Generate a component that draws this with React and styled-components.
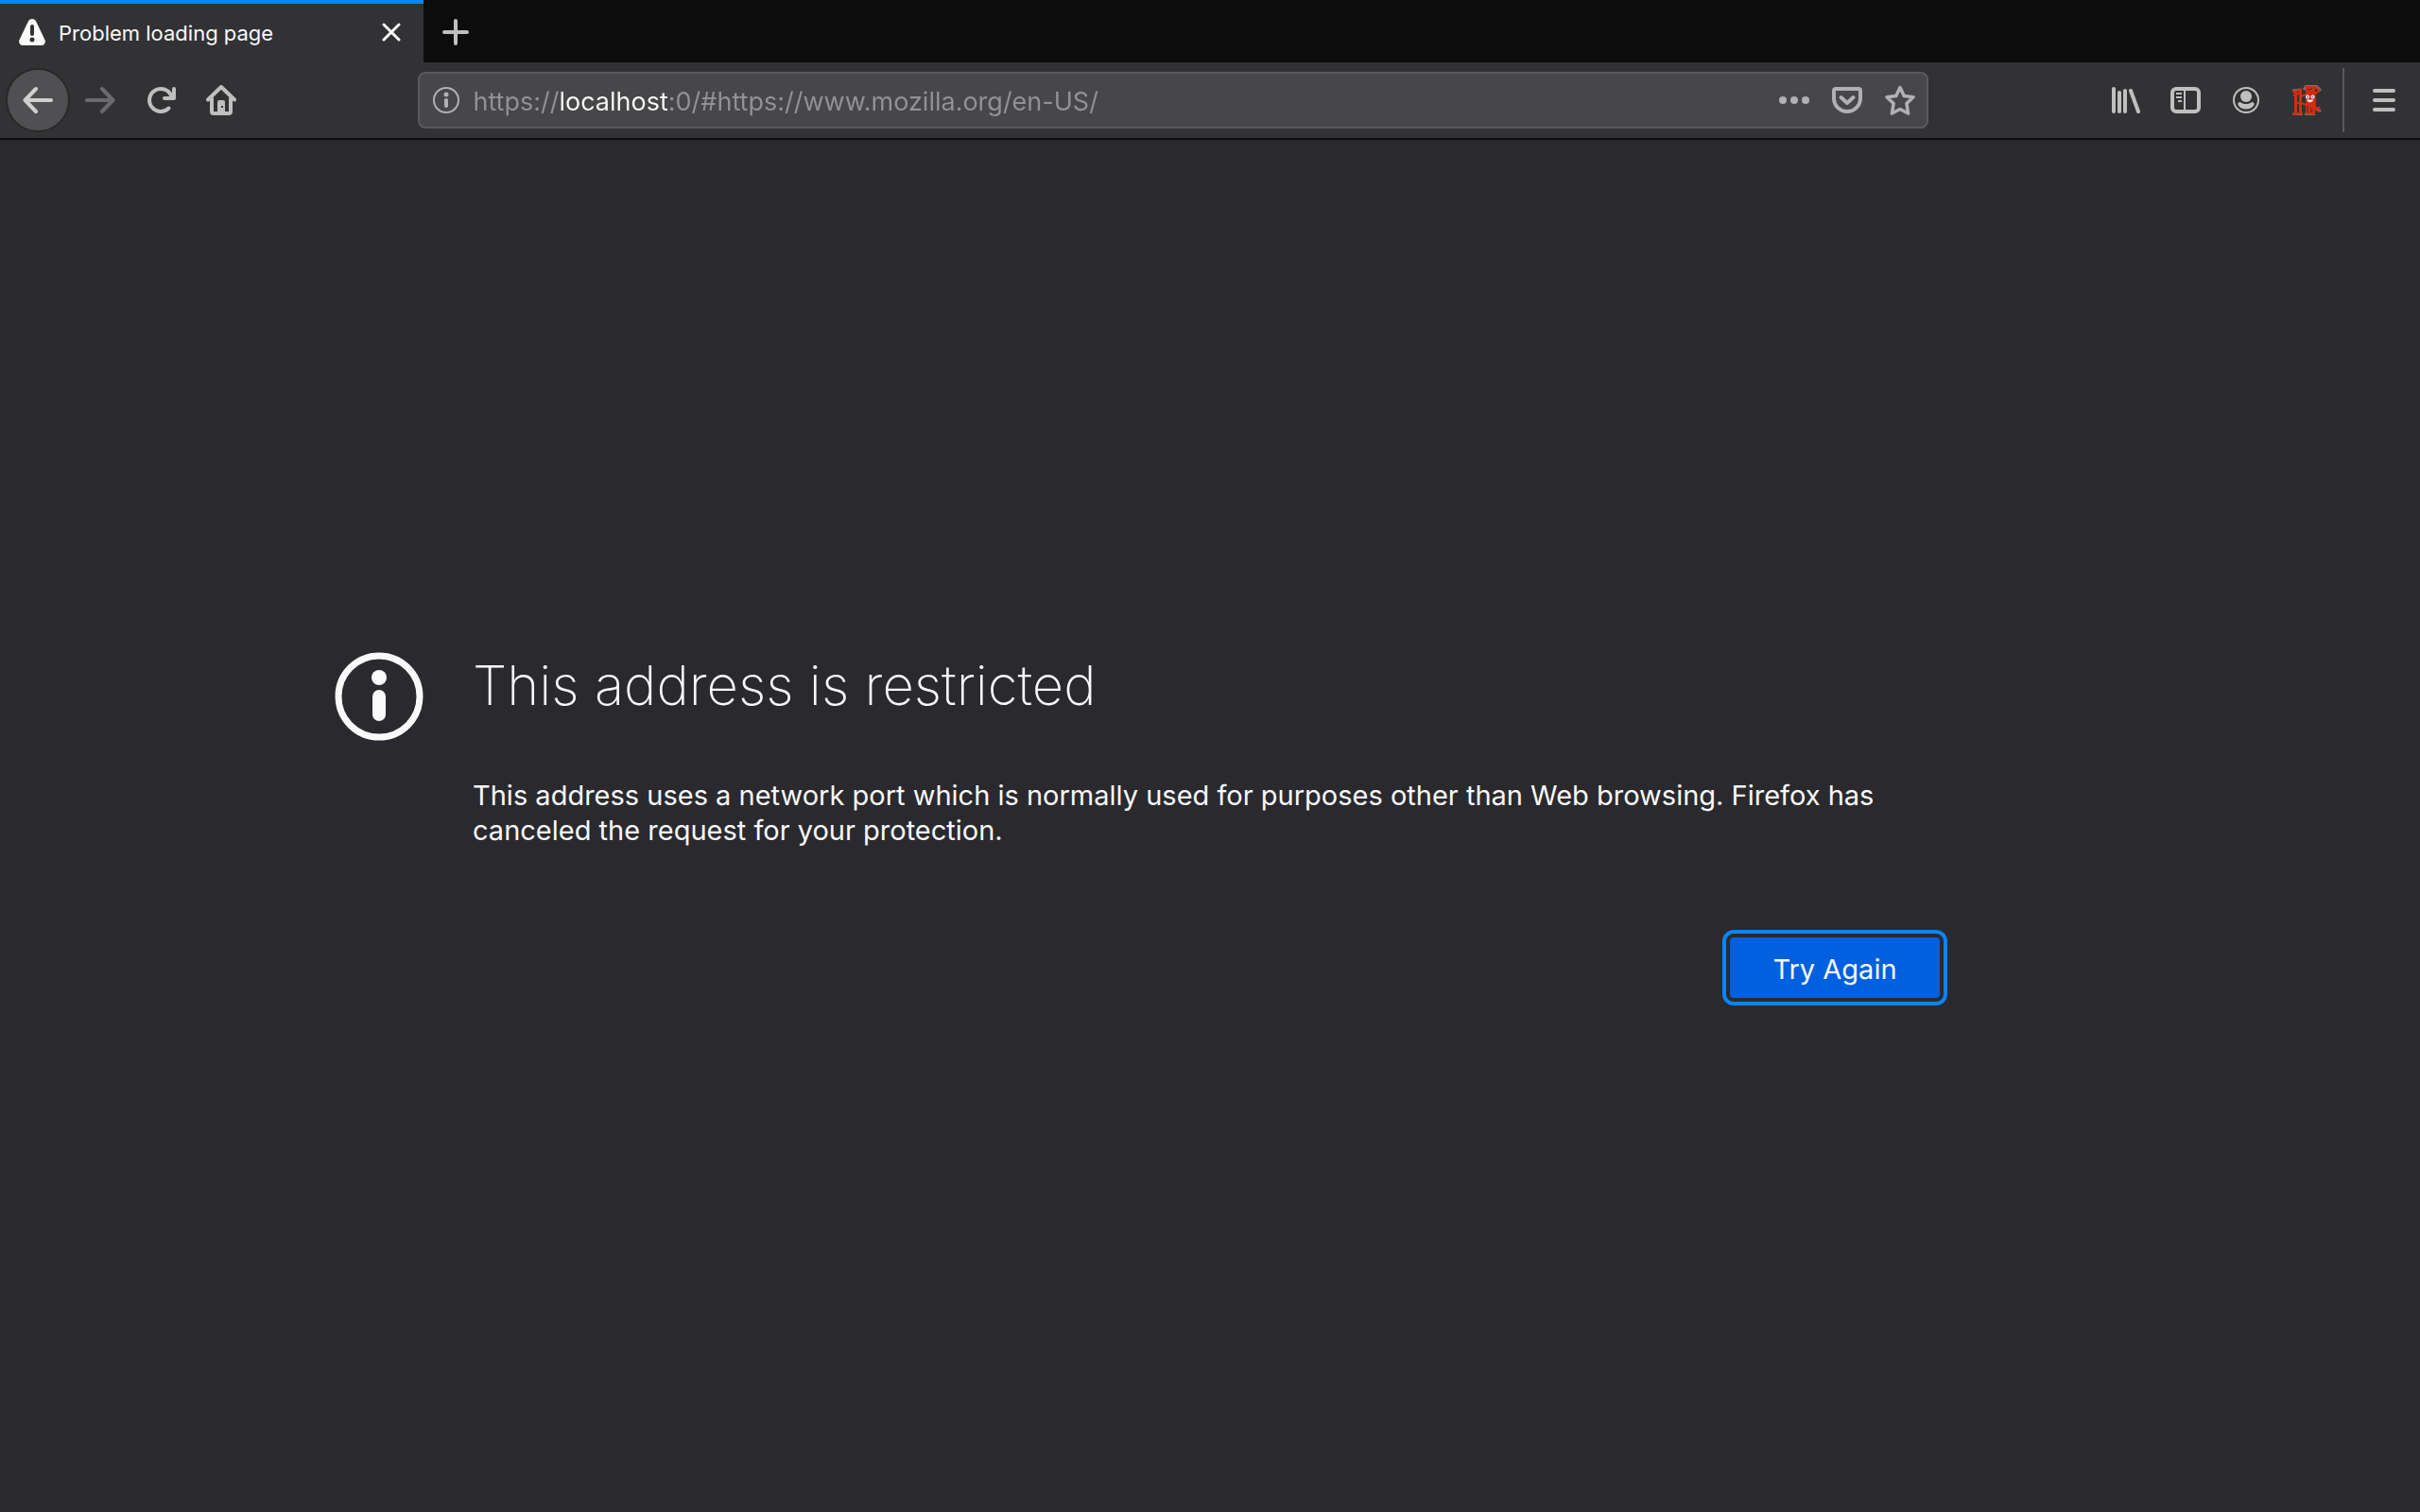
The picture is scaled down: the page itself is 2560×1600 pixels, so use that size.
import React, { useState } from "react";
import styled, { createGlobalStyle } from "styled-components";

const GlobalStyle = createGlobalStyle`
  * { box-sizing: border-box; }
  body { margin: 0; background: #2a2a2e; }
  button, input { font: inherit; }
`;

const Window = styled.div`
  display: flex;
  flex-direction: column;
  min-height: 100vh;
  background: #2a2a2e;
  color: #f9f9fa;
  font-family: Inter, "Liberation Sans", sans-serif;
`;

const TabStrip = styled.div`
  display: flex;
  height: 66px;
  background: #0c0c0d;
`;

const Tab = styled.div`
  display: flex;
  align-items: center;
  gap: 14px;
  width: 448px;
  padding: 0 14px 2px 20px;
  border-top: 4px solid #0a84ff;
  background: #323234;
`;

const TabTitle = styled.span`
  flex: 1;
  padding-top: 2px;
  font-size: 22px;
  line-height: 28px;
  white-space: nowrap;
`;

const IconButton = styled.button`
  display: flex;
  align-items: center;
  justify-content: center;
  flex: none;
  width: ${(p) => p.$size || 64}px;
  height: ${(p) => p.$size || 64}px;
  padding: 0;
  border: 0;
  background: none;
  color: ${(p) => p.$color || "#bfbfc0"};
`;

const BackButton = styled(IconButton)`
  border: 2px solid #282829;
  border-radius: 50%;
  background: #505052;
  color: #d0d0d1;
`;

const Toolbar = styled.nav`
  display: flex;
  align-items: center;
  height: 82px;
  padding: 0 6px;
  border-bottom: 2px solid #0c0c0d;
  background: #323234;
`;

const Spacer = styled.div`
  flex: 1;
`;

const UrlBar = styled.div`
  display: flex;
  align-items: center;
  flex: 9;
  height: 60px;
  margin: 0 1px;
  padding: 0 0 0 14px;
  border: 2px solid #5a5a5c;
  border-radius: 8px;
  background: #474749;
  color: #b1b1b3;
`;

const UrlInput = styled.input`
  flex: 1;
  min-width: 0;
  height: 40px;
  margin-left: 14px;
  padding: 2px 0 0;
  border: 0;
  outline: 0;
  background: linear-gradient(90deg, #929294 91px, #f9f9fa 91px 207px, #929294 207px);
  background-clip: text;
  -webkit-background-clip: text;
  color: transparent;
  font-size: 27px;
`;

const Separator = styled.div`
  width: 2px;
  height: 68px;
  margin: 0 10px 0 6px;
  background: #5a5a5c;
`;

const Page = styled.main`
  display: grid;
  flex: 1;
  grid-template-columns: 1fr minmax(0, 1560px) 1fr;
  align-content: center;
`;

const PageIcon = styled.div`
  justify-self: end;
  margin: 6px 52px 0 0;
`;

const Title = styled.h1`
  margin: 0 0 57px;
  font-size: 58px;
  font-weight: 200;
  line-height: 82px;
`;

const Message = styled.p`
  margin: 0;
  font-size: 29px;
  line-height: 37px;
`;

const Actions = styled.div`
  display: flex;
  justify-content: flex-end;
  padding: 95px 8px 8px;
`;

const PrimaryButton = styled.button`
  width: 222px;
  height: 64px;
  padding: 2px 0 0;
  border: 0;
  border-radius: 4px;
  outline: 4px solid #0a84ff;
  outline-offset: 4px;
  background: #0060df;
  color: #f9f9fa;
  font-size: 29px;
`;

const Svg = ({ size = 32, children }) => (
  <svg width={size} height={size} viewBox={`0 0 ${size} ${size}`} fill="none" aria-hidden="true">
    {children}
  </svg>
);

const line = { stroke: "currentColor", strokeWidth: 4, strokeLinecap: "round", strokeLinejoin: "round" };

const WarningIcon = () => (
  <Svg size={28}>
    <path fill="currentColor" fillRule="evenodd" d="M14 0c1.900 0 3.300 1 4.200 2.700l9.200 19.200C28.800 25 27 28 24 28H4C1 28-.8 25 .6 21.900L9.800 2.700C10.700 1 12.100 0 14 0zm0 6a2 2 0 0 0-2 2v8a2 2 0 0 0 4 0V8a2 2 0 0 0-2-2zm0 13.500a2.500 2.500 0 1 0 0 5 2.500 2.500 0 0 0 0-5z" />
  </Svg>
);
const CloseIcon = () => <Svg size={20}><path {...line} strokeWidth={3} d="M2 2l16 16M18 2L2 18" /></Svg>;
const PlusIcon = () => <Svg size={28}><path {...line} d="M14 2v24M2 14h24" /></Svg>;
const BackIcon = () => <Svg><path {...line} d="M14 4L2.500 16 14 28M3 16h27" /></Svg>;
const ForwardIcon = () => <Svg><path {...line} d="M18 4l11.500 12L18 28M29 16H2" /></Svg>;
const ReloadIcon = () => (
  <Svg>
    <path {...line} d="M24.500 24.500A12 12 0 1 1 27 11M30 4v10H20" />
    <path fill="currentColor" d="M25 8h5v6h-5z" />
  </Svg>
);
const HomeIcon = () => (
  <Svg>
    <path {...line} d="M2 15.500L16 2l14 13.500M6 14v14a2 2 0 0 0 2 2h16a2 2 0 0 0 2-2V14" />
    <path fill="currentColor" fillRule="evenodd" d="M14 16h4a2 2 0 0 1 2 2v12h-8V18a2 2 0 0 1 2-2zm2 6v2h2v-2z" />
  </Svg>
);
const InfoIcon = () => (
  <Svg size={28}>
    <circle cx="14" cy="14" r="13" stroke="currentColor" strokeWidth="2" />
    <circle cx="14" cy="8" r="2.500" fill="currentColor" />
    <path {...line} d="M14 14v6" />
  </Svg>
);
const DotsIcon = () => (
  <Svg><g fill="currentColor"><circle cx="4" cy="16" r="4" /><circle cx="16" cy="16" r="4" /><circle cx="28" cy="16" r="4" /></g></Svg>
);
const PocketIcon = () => (
  <Svg><path {...line} d="M4 4h24a2 2 0 0 1 2 2v8a14 14 0 0 1-28 0V6a2 2 0 0 1 2-2z" /><path {...line} d="M9.500 13l6.500 6 6.500-6" /></Svg>
);
const StarIcon = () => (
  <Svg><path {...line} strokeWidth={3.5} d="M16 2.500l4.200 9 9.800 1.300-7.100 6.800 1.700 10.400L16 25.500 7.400 30l1.700-10.400L2 12.800l9.800-1.300z" /></Svg>
);
const LibraryIcon = () => <Svg><path {...line} d="M4 4v24M10 8v20M16 6v22M22 6l8 22" /></Svg>;
const SidebarIcon = () => (
  <Svg>
    <rect x="2" y="4" width="28" height="24" rx="4" stroke="currentColor" strokeWidth="4" />
    <path stroke="currentColor" strokeWidth="2" d="M15 4v24M6 9h6M6 13h6M8 17h4" />
  </Svg>
);
const AccountIcon = () => (
  <Svg>
    <circle cx="16" cy="16" r="13" stroke="currentColor" strokeWidth="2" />
    <circle cx="16" cy="12" r="6" fill="currentColor" />
    <path fill="currentColor" d="M10 18c1.500 1.500 3.500 2 6 2s4.500-.5 6-2c2 0 3 1 2.500 3-1.500 3-5 4.500-8.500 4.500S9 24 7.500 21C7 19 8 18 10 18z" />
  </Svg>
);
const ExtensionIcon = () => (
  <Svg>
    <path stroke="#7d6f68" strokeWidth="3" strokeLinejoin="round" d="M1 6l10-1M13 5l3-4h10l5 5M1 31h11M14 31h11M23 23l8 5" />
    <path stroke="#d42c10" strokeWidth="3" d="M4.500 6v24M9.500 6v24" />
    <path stroke="#d42c10" strokeWidth="2" d="M1 7l10-2M2 11l8-3M3 18l8 2M1 31l11-1M10 19l6 2M10 12l5-2" />
    <path fill="#d42c10" d="M15 1h10l1 20-1 10H15z" />
    <path stroke="#d42c10" strokeWidth="2" d="M25 2l5 4M25 10l4-4M24 27l6-4M23 23l7 5" />
    <path stroke="#323234" d="M17 5l5-1M17 22v7M20 24l2 3M20 29l2-3" />
    <circle cx="17" cy="12.500" r="2" fill="#fff" /><circle cx="22.500" cy="12.500" r="2" fill="#fff" />
    <circle cx="17" cy="12.500" r="1" fill="#3b82c4" /><circle cx="22.500" cy="12.500" r="1" fill="#3b82c4" />
    <path fill="#fff" d="M16.500 15.500h6.500c-.5 3.500-6 3.500-6.500 0z" />
  </Svg>
);
const MenuIcon = () => <Svg><path {...line} d="M6 6h20M6 16h20M6 26h20" /></Svg>;
const LargeInfoIcon = () => (
  <Svg size={94}>
    <circle cx="47" cy="47" r="43" stroke="currentColor" strokeWidth="7" />
    <circle cx="47" cy="27" r="8" fill="currentColor" />
    <path stroke="currentColor" strokeWidth="14" strokeLinecap="round" d="M47 47v19" />
  </Svg>
);

export default function App() {
  const [url, setUrl] = useState("https://localhost:0/#https://www.mozilla.org/en-US/");
  return (
    <Window>
      <GlobalStyle />
      <TabStrip>
        <Tab>
          <WarningIcon />
          <TabTitle>Problem loading page</TabTitle>
          <IconButton $size={40} $color="#f9f9fa" aria-label="Close tab"><CloseIcon /></IconButton>
        </Tab>
        <IconButton $size={68} aria-label="New tab"><PlusIcon /></IconButton>
      </TabStrip>
      <Toolbar>
        <BackButton $size={68} aria-label="Back"><BackIcon /></BackButton>
        <IconButton $color="#6b6b6d" aria-label="Forward"><ForwardIcon /></IconButton>
        <IconButton aria-label="Reload"><ReloadIcon /></IconButton>
        <IconButton aria-label="Home"><HomeIcon /></IconButton>
        <Spacer />
        <UrlBar>
          <InfoIcon />
          <UrlInput aria-label="Address" value={url} onChange={(e) => setUrl(e.target.value)} />
          <IconButton $size={56} $color="inherit" aria-label="Page actions"><DotsIcon /></IconButton>
          <IconButton $size={56} $color="inherit" aria-label="Save to Pocket"><PocketIcon /></IconButton>
          <IconButton $size={56} $color="inherit" aria-label="Bookmark this page"><StarIcon /></IconButton>
        </UrlBar>
        <Spacer />
        <IconButton aria-label="Library"><LibraryIcon /></IconButton>
        <IconButton aria-label="Sidebars"><SidebarIcon /></IconButton>
        <IconButton aria-label="Account"><AccountIcon /></IconButton>
        <IconButton aria-label="Extension"><ExtensionIcon /></IconButton>
        <Separator />
        <IconButton aria-label="Menu"><MenuIcon /></IconButton>
      </Toolbar>
      <Page>
        <PageIcon><LargeInfoIcon /></PageIcon>
        <section>
          <Title>This address is restricted</Title>
          <Message>
            This address uses a network port which is normally used for purposes other than Web browsing. Firefox has
            canceled the request for your protection.
          </Message>
          <Actions><PrimaryButton>Try Again</PrimaryButton></Actions>
        </section>
      </Page>
    </Window>
  );
}
